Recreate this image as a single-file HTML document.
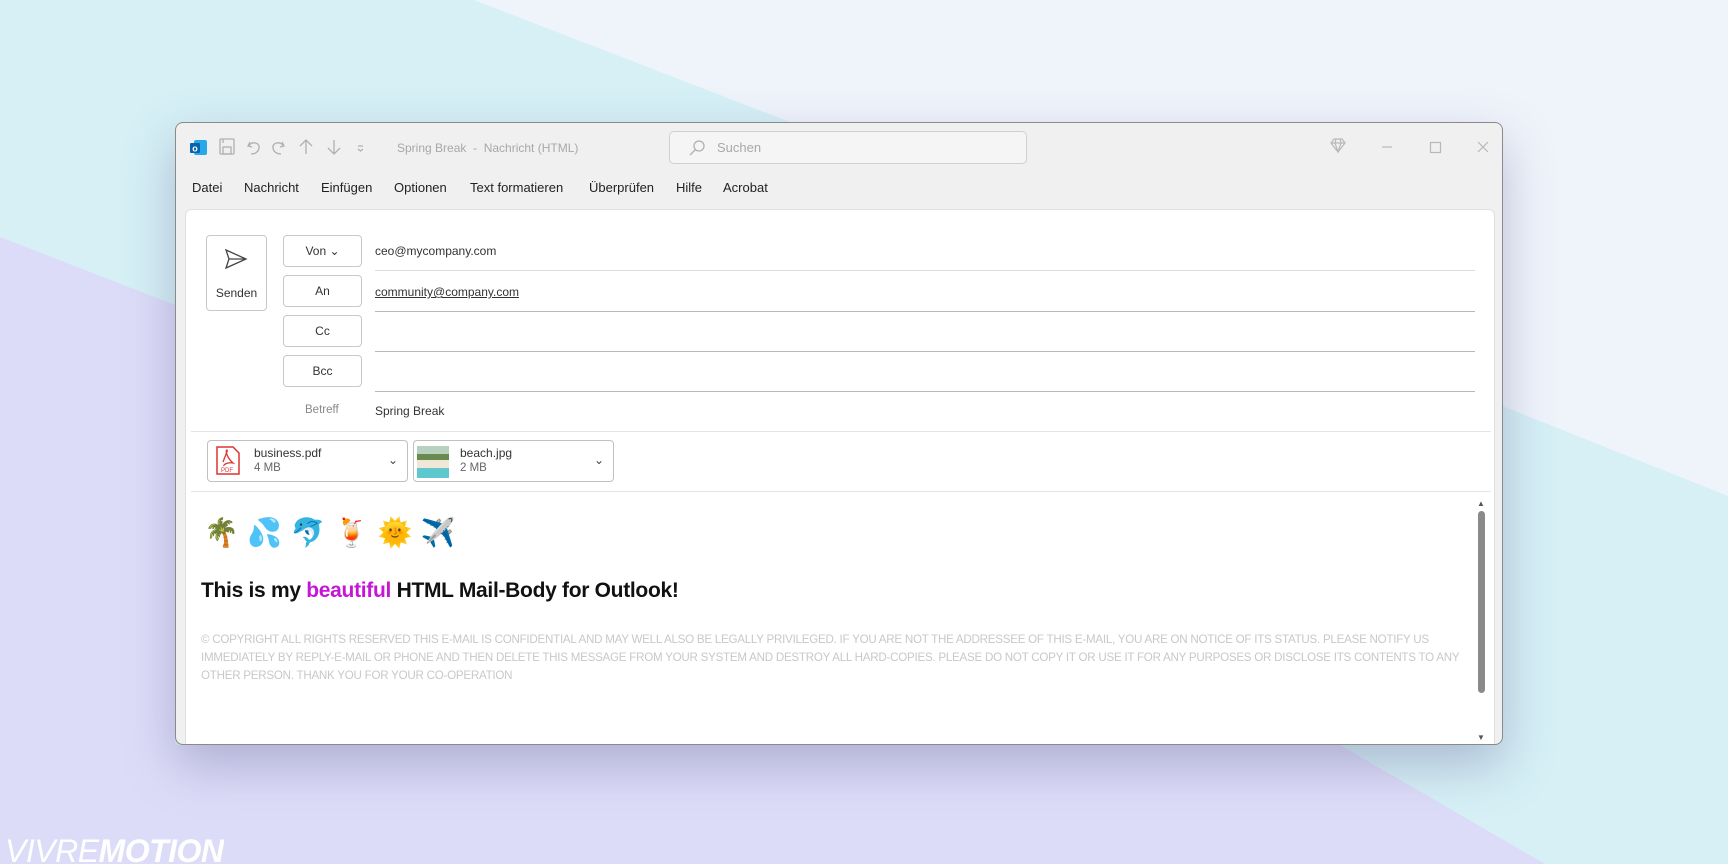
<!DOCTYPE html>
<html><head><meta charset="utf-8"><style>
*{margin:0;padding:0;box-sizing:border-box}
html,body{width:1728px;height:864px;overflow:hidden}
body{position:relative;font-family:"Liberation Sans",sans-serif;background:#d6f0f6}
.bg{position:absolute;left:0;top:0;display:block}
.win{position:absolute;left:175px;top:122px;width:1328px;height:623px;background:#f0f0f0;border:1px solid #8a8a8a;border-radius:8px;box-shadow:0 20px 50px rgba(90,90,140,.35);overflow:hidden}
.t{position:absolute;white-space:nowrap}
.title{color:#a8a8a8;font-size:12px}
.menu{font-size:13px;color:#222;top:57px}
.panel{position:absolute;left:9px;top:86px;width:1310px;height:540px;background:#fff;border:1px solid #e0e0e0;border-radius:6px}
.btn{position:absolute;border:1px solid #c8c8c8;border-radius:4px;background:#fff;font-size:12px;color:#333;text-align:center}
.line{position:absolute;left:189px;width:1100px;height:1px;background:#b8b8b8}
.att{position:absolute;top:230px;height:42px;border:1px solid #c0c0c0;border-radius:4px;background:#fff}
.copy{font-size:11.6px;color:#c8c8c8;letter-spacing:-.25px;left:15px}
</style></head><body>
<svg class="bg" width="1728" height="864">
<rect width="1728" height="864" fill="#d6f0f6"/>
<polygon points="474,0 1728,0 1728,496 790,122" fill="#eff4fb"/>
<polygon points="0,237 0,864 1545,864 1340,745 175,745 175,305" fill="#dddcf8"/>
</svg>
<div class="win">
 <svg class="t" style="left:14px;top:16px" width="18" height="18"><rect x="4" y="1" width="13" height="15" rx="2" fill="#28a8ea"/><rect x="0" y="4" width="10" height="10" rx="1" fill="#0a64ad"/><text x="2.3" y="12.5" font-size="9" font-weight="bold" fill="#fff" font-family="Liberation Sans">o</text></svg>
 <svg class="t" style="left:42px;top:14px" width="190" height="20" fill="none" stroke="#b0b0b0" stroke-width="1.3">
  <rect x="2" y="2" width="14" height="15" rx="1"/><rect x="5" y="10" width="8" height="7"/><line x1="5" y1="2" x2="5" y2="6"/>
  <path d="M32 5 L30 9 L34 10 M30.5 9 C33 4 42 5 41 11 C40.5 15 37 17 33 17"/>
  <path d="M64 5 L66 9 L62 10 M65.5 9 C63 4 54 5 55 11 C55.5 15 59 17 63 17"/>
  <path d="M88 17 V3 M82 9 L88 3 L94 9"/><path d="M116 3 V17 M110 11 L116 17 L122 11"/>
  <path d="M140 9 h5 M140 12 l2.5 2 l2.5 -2"/>
 </svg>
 <div class="t title" style="left:221px;top:18px">Spring Break &nbsp;-&nbsp; Nachricht (HTML)</div>
 <div class="t" style="left:493px;top:8px;width:358px;height:33px;border:1px solid #d0d0d0;border-radius:5px;background:#f5f5f5"></div>
 <svg class="t" style="left:512px;top:16px" width="18" height="18" fill="none" stroke="#b0b0b0" stroke-width="1.3"><circle cx="11" cy="7" r="5"/><path d="M7.5 10.5 L2 16"/></svg>
 <div class="t title" style="left:541px;top:17px;font-size:13px">Suchen</div>
 <svg class="t" style="left:1151px;top:14px" width="200" height="20" fill="none" stroke="#b8b8b8" stroke-width="1.2">
  <path d="M4 6 L7 2 H15 L18 6 L11 15 Z M4 6 H18 M9 2 L8 6 L11 15 L14 6 L13 2"/>
  <path d="M55 10 H65"/><rect x="103.5" y="5.5" width="10" height="10"/><path d="M151 5 L161 15 M161 5 L151 15"/>
 </svg>
 <div class="t menu" style="left:16px">Datei</div>
 <div class="t menu" style="left:68px">Nachricht</div>
 <div class="t menu" style="left:145px">Einfügen</div>
 <div class="t menu" style="left:218px">Optionen</div>
 <div class="t menu" style="left:294px">Text formatieren</div>
 <div class="t menu" style="left:413px">Überprüfen</div>
 <div class="t menu" style="left:500px">Hilfe</div>
 <div class="t menu" style="left:547px">Acrobat</div>
 <div class="panel">
  <div class="btn" style="left:20px;top:25px;width:61px;height:76px;padding-top:50px">Senden</div>
  <svg class="t" style="left:38px;top:38px" width="24" height="22" fill="none" stroke="#444" stroke-width="1.3"><path d="M2 2 L22 11 L2 20 L5 11 Z M5 11 H22"/></svg>
  <div class="btn" style="left:97px;top:25px;width:79px;height:32px;line-height:30px">Von &#8964;</div>
  <div class="btn" style="left:97px;top:65px;width:79px;height:32px;line-height:30px">An</div>
  <div class="btn" style="left:97px;top:105px;width:79px;height:32px;line-height:30px">Cc</div>
  <div class="btn" style="left:97px;top:145px;width:79px;height:32px;line-height:30px">Bcc</div>
  <div class="t" style="left:189px;top:34px;font-size:12px;color:#333">ceo@mycompany.com</div>
  <div class="t" style="left:189px;top:75px;font-size:12px;color:#333;text-decoration:underline">community@company.com</div>
  <div class="line" style="top:60px;background:#ddd"></div>
  <div class="line" style="top:101px"></div>
  <div class="line" style="top:141px"></div>
  <div class="line" style="top:181px"></div>
  <div class="t" style="left:119px;top:194px;font-size:11.5px;color:#888">Betreff</div>
  <div class="t" style="left:189px;top:194px;font-size:12px;color:#333">Spring Break</div>
  <div class="t" style="left:5px;top:221px;width:1300px;height:1px;background:#e4e4e4"></div>
  <div class="att" style="left:21px;width:201px">
   <svg class="t" style="left:7px;top:5px" width="26" height="30"><path d="M2 1 H18 L24 7 V28 H2 Z" fill="#fff" stroke="#d33" stroke-width="1.5"/><path d="M8 16 C11 8 13 4 12 4 C10 4 12 12 18 17 C12 16 8 19 9 20" fill="none" stroke="#d33" stroke-width="1.3"/><text x="6" y="26" font-size="6" fill="#d33" font-family="Liberation Sans">PDF</text></svg>
   <div class="t" style="left:46px;top:5px;font-size:12px;color:#333">business.pdf</div>
   <div class="t" style="left:46px;top:21px;font-size:11.5px;color:#666">4 MB</div>
   <div class="t" style="left:180px;top:12px;font-size:12px;color:#444">&#8964;</div>
  </div>
  <div class="att" style="left:227px;width:201px">
   <svg class="t" style="left:3px;top:5px" width="32" height="32"><rect width="32" height="12" fill="#b8d0c0"/><rect y="8" width="32" height="6" fill="#6b8a50"/><rect y="14" width="32" height="8" fill="#efe8d8"/><rect y="22" width="32" height="10" fill="#5fc8cf"/></svg>
   <div class="t" style="left:46px;top:5px;font-size:12px;color:#333">beach.jpg</div>
   <div class="t" style="left:46px;top:21px;font-size:11.5px;color:#666">2 MB</div>
   <div class="t" style="left:180px;top:12px;font-size:12px;color:#444">&#8964;</div>
  </div>
  <div class="t" style="left:5px;top:281px;width:1300px;height:1px;background:#e4e4e4"></div>
  <div class="t" style="left:18px;top:306px;font-size:28px;letter-spacing:8.5px">🌴💦🐬🍹🌞✈️</div>
  <div class="t" style="left:15px;top:369px;font-size:21px;font-weight:bold;color:#111;letter-spacing:-.3px">This is my <span style="color:#c515d8">beautiful</span> HTML Mail-Body for Outlook!</div>
  <div class="t copy" style="top:423px">© COPYRIGHT ALL RIGHTS RESERVED THIS E-MAIL IS CONFIDENTIAL AND MAY WELL ALSO BE LEGALLY PRIVILEGED. IF YOU ARE NOT THE ADDRESSEE OF THIS E-MAIL, YOU ARE ON NOTICE OF ITS STATUS. PLEASE NOTIFY US</div>
  <div class="t copy" style="top:441px">IMMEDIATELY BY REPLY-E-MAIL OR PHONE AND THEN DELETE THIS MESSAGE FROM YOUR SYSTEM AND DESTROY ALL HARD-COPIES. PLEASE DO NOT COPY IT OR USE IT FOR ANY PURPOSES OR DISCLOSE ITS CONTENTS TO ANY</div>
  <div class="t copy" style="top:459px">OTHER PERSON. THANK YOU FOR YOUR CO-OPERATION</div>
  <div class="t" style="left:1291px;top:289px;font-size:8px;color:#555">▲</div>
  <div class="t" style="left:1292px;top:301px;width:7px;height:182px;background:#8a8a8a;border-radius:4px"></div>
  <div class="t" style="left:1291px;top:523px;font-size:8px;color:#555">▼</div>
 </div>
</div>
<div class="t" style="left:5px;top:834px;height:30px;overflow:hidden;font-size:32px;color:#fff;font-style:italic;letter-spacing:-.5px;line-height:34px">VIVRE<b>MOTION</b></div>
</body></html>
